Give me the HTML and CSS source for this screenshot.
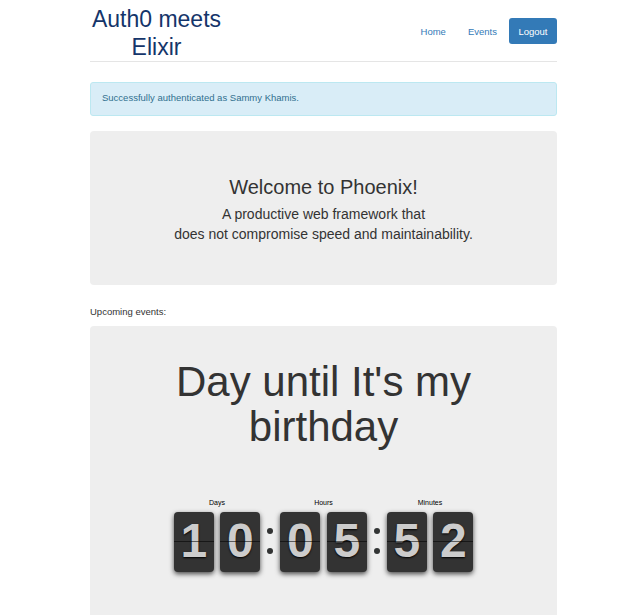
FILE: index.html
```html
<!DOCTYPE html>
<html>
<head>
<meta charset="utf-8">
<title>Auth0 meets Elixir</title>
<link rel="stylesheet" href="styles.css">
</head>
<body>
<div class="container">
  <header class="header">
    <h1 class="brand">Auth0 meets Elixir</h1>
    <nav class="nav">
      <a class="nav-link" href="#">Home</a>
      <a class="nav-link" href="#">Events</a>
      <a class="nav-link nav-active" href="#">Logout</a>
    </nav>
  </header>

  <div class="alert">Successfully authenticated as Sammy Khamis.</div>

  <section class="jumbotron welcome">
    <h2 class="welcome-title">Welcome to Phoenix!</h2>
    <p class="lead">A productive web framework that<br>does not compromise speed and maintainability.</p>
  </section>

  <p class="upcoming">Upcoming events:</p>

  <section class="jumbotron event">
    <h1 class="event-title">Day until It's my birthday</h1>
    <div class="clock">
      <div class="group">
        <div class="label">Days</div>
        <div class="cards">
          <div class="card">1</div>
          <div class="card">0</div>
        </div>
      </div>
      <div class="colon"><span class="dot"></span><span class="dot"></span></div>
      <div class="group">
        <div class="label">Hours</div>
        <div class="cards">
          <div class="card">0</div>
          <div class="card">5</div>
        </div>
      </div>
      <div class="colon"><span class="dot"></span><span class="dot"></span></div>
      <div class="group">
        <div class="label">Minutes</div>
        <div class="cards">
          <div class="card">5</div>
          <div class="card">2</div>
        </div>
      </div>
    </div>
  </section>
</div>
</body>
</html>
```
FILE: styles.css
```css
html, body {
  margin: 0;
  padding: 0;
  background: #fff;
}
body {
  font-family: "Liberation Sans", Arial, sans-serif;
  color: #333;
}
.container {
  width: 467px;
  margin-left: 90px;
}
.header {
  display: flex;
  justify-content: space-between;
  align-items: flex-start;
  height: 61px;
  border-bottom: 1px solid #e5e5e5;
}
.brand {
  margin: 5px 0 0 0;
  width: 133px;
  text-align: center;
  font-size: 23px;
  line-height: 28px;
  font-weight: normal;
  color: #15356a;
}
.nav {
  display: flex;
  margin-top: 18px;
}
.nav-link {
  display: block;
  margin-left: 2px;
  padding: 7px 10px 5px;
  font-size: 9.5px;
  line-height: 14px;
  color: #337ab7;
  text-decoration: none;
  border-radius: 3px;
}
.nav-active {
  background: #337ab7;
  color: #fff;
  padding-left: 9.5px;
  padding-right: 9.5px;
}
.alert {
  margin-top: 20px;
  padding: 8px 11px 10px;
  font-size: 9.5px;
  line-height: 14px;
  color: #31708f;
  background: #d9edf7;
  border: 1px solid #bce8f1;
  border-radius: 3px;
}
.jumbotron {
  background: #eeeeee;
  border-radius: 4px;
  text-align: center;
}
.welcome {
  margin-top: 15px;
  padding: 45px 20px 41px;
}
.welcome-title {
  margin: 0 0 6px;
  font-size: 20px;
  line-height: 22px;
  font-weight: normal;
  color: #333;
}
.lead {
  margin: 0;
  font-size: 14px;
  line-height: 20px;
  color: #333;
}
.upcoming {
  margin: 20px 0 7px;
  font-size: 9.5px;
  line-height: 14px;
  color: #333;
}
.event {
  padding: 33px 40px 60px;
}
.event-title {
  margin: 0;
  font-size: 42px;
  line-height: 45px;
  font-weight: normal;
  color: #333;
}
.clock {
  display: flex;
  justify-content: center;
  margin-top: 49px;
}
.group {
  display: flex;
  flex-direction: column;
  align-items: center;
}
.label {
  font-size: 7px;
  line-height: 9px;
  color: #000;
  margin-bottom: 5px;
}
.cards {
  display: flex;
  gap: 6.5px;
}
.card {
  position: relative;
  width: 40px;
  height: 60px;
  background: #333;
  border-radius: 4px;
  box-shadow: 0 2px 5px rgba(0, 0, 0, 0.7);
  color: #ccc;
  font-weight: bold;
  font-size: 48px;
  line-height: 57px;
  text-align: center;
  text-shadow: 0 1px 2px #000;
}
.card::after {
  content: "";
  position: absolute;
  left: 0;
  right: 0;
  top: 29px;
  height: 1px;
  background: rgba(0, 0, 0, 0.55);
}
.colon {
  width: 20px;
  display: flex;
  flex-direction: column;
  align-items: center;
  padding-top: 30px;
  gap: 14px;
}
.dot {
  display: block;
  width: 6px;
  height: 6px;
  border-radius: 50%;
  background: #323434;
}
```
